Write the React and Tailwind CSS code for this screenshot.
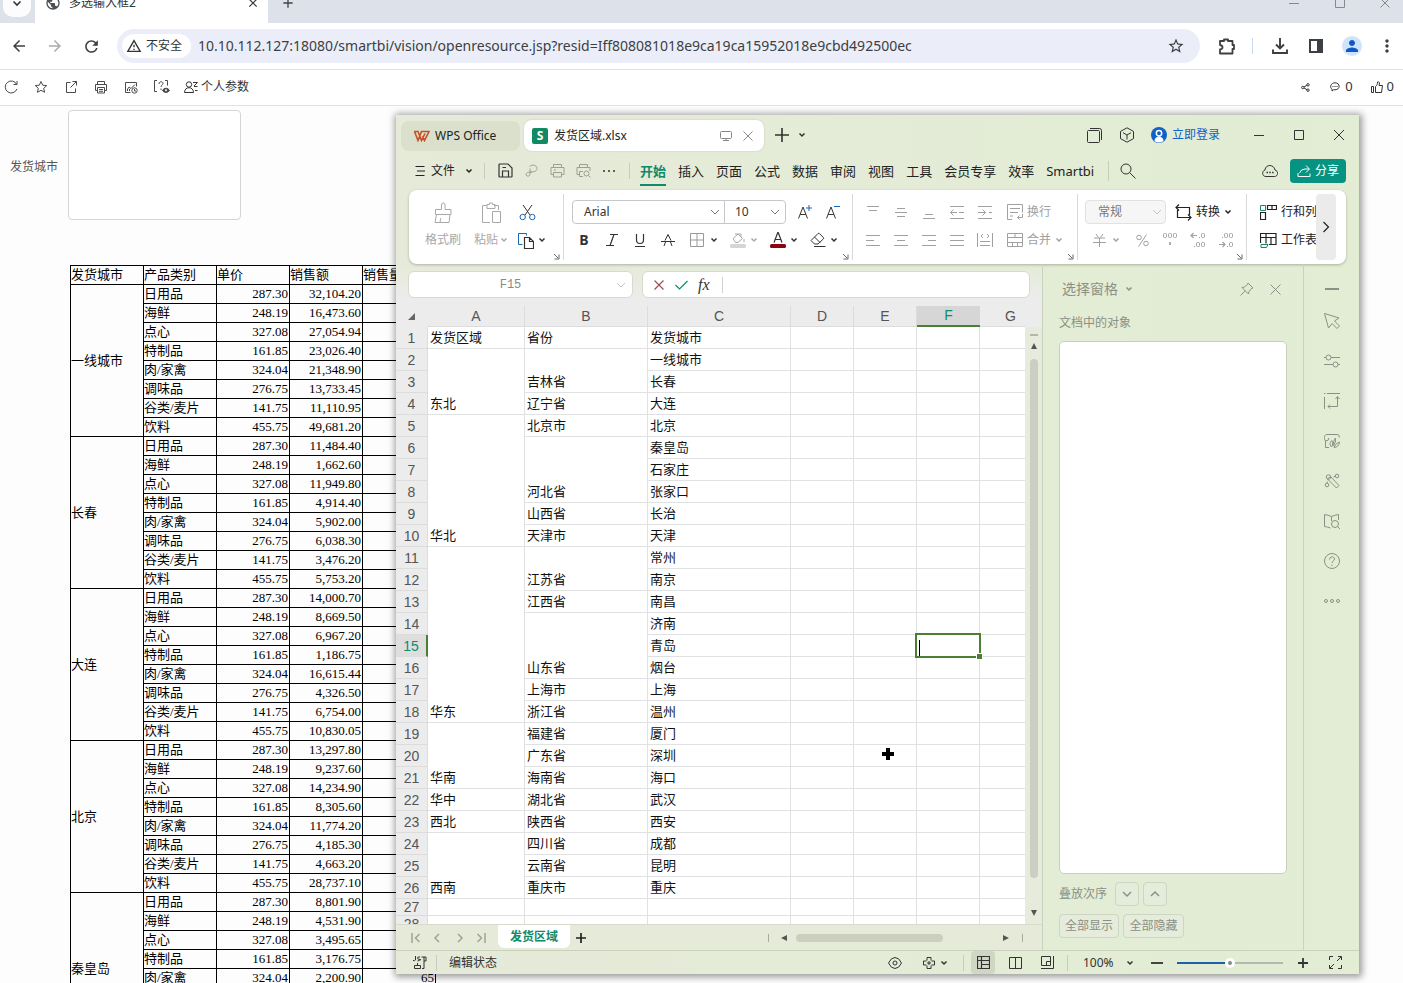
import React from "react";
import {
  MdArrowBack,
  MdArrowForward,
  MdRefresh,
  MdStarBorder,
  MdPerson,
  MdMoreVert,
  MdPublic,
  MdOutlineWarningAmber,
  MdAdd,
  MdClose,
} from "react-icons/md";

function Svg({ w = 16, h = w, className = "", children }) {
  return (
    <svg
      width={w}
      height={h}
      viewBox={`0 0 ${w} ${h}`}
      fill="none"
      stroke="currentColor"
      strokeWidth="1"
      className={`shrink-0 ${className}`}
      aria-hidden="true"
    >
      {children}
    </svg>
  );
}

function IconButton({ label, className = "", children }) {
  return (
    <button type="button" aria-label={label} className={`flex shrink-0 items-center justify-center ${className}`}>
      {children}
    </button>
  );
}

const Chevron = ({ className = "" }) => (
  <Svg w={8} className={className}>
    <path d="M1.500 2.500 4 5l2.500-2.500" strokeWidth="1.500" />
  </Svg>
);
const WideChevron = ({ className = "" }) => (
  <Svg w={10} className={className}>
    <path d="m1 3 4 4 4-4" />
  </Svg>
);

/* ---------- Browser ---------- */

function TabStrip() {
  return (
    <div className="flex h-[23px] shrink-0 items-end overflow-hidden bg-[#dde1e9]">
      <div className="flex h-10 w-full shrink-0 items-center">
        <IconButton label="搜索标签页" className="ml-[3px] h-7 w-7 rounded-[10px] bg-[#fcfcfe] text-[#333]">
          <Svg w={10}><path d="m1.500 3.500 3.500 3.500 3.500-3.500" strokeWidth="1.600" /></Svg>
        </IconButton>
        <div className="ml-1 flex h-10 w-[233px] items-center rounded-t-xl bg-white pl-[10px] pr-2">
          <MdPublic className="size-4 text-[#4d5156]" />
          <span className="ml-2 flex-1 text-xs leading-5 text-[#333]">多选输入框2</span>
          <IconButton label="关闭标签页" className="text-[#333]"><MdClose className="size-3.5" /></IconButton>
        </div>
        <IconButton label="新标签页" className="ml-3 text-[#444]"><MdAdd className="size-4" /></IconButton>
        <div className="ml-auto flex text-[#888]">
          <IconButton label="最小化" className="w-[46px]"><Svg w={10}><path d="M0 5.500h10" /></Svg></IconButton>
          <IconButton label="最大化" className="w-[46px]"><Svg w={10}><path d="M.5.5h9v9h-9z" /></Svg></IconButton>
          <IconButton label="关闭" className="w-[40px] pl-1"><Svg w={10}><path d="m.5.5 9 9m0-9-9 9" /></Svg></IconButton>
        </div>
      </div>
    </div>
  );
}

function AddressBar() {
  return (
    <div className="flex h-[46px] shrink-0 items-center bg-white pl-px text-[#3c3f43]">
      <IconButton label="后退" className="w-9"><MdArrowBack className="size-[18px]" /></IconButton>
      <IconButton label="前进" className="w-9 text-[#a9abae]"><MdArrowForward className="size-[18px]" /></IconButton>
      <IconButton label="重新加载" className="w-9"><MdRefresh className="size-[19px]" /></IconButton>
      <div className="ml-2 flex h-[34px] min-w-0 flex-1 items-center rounded-full bg-[#ebeef8] pl-[5px] pr-[15px]">
        <span className="flex h-6 w-[69px] shrink-0 items-center rounded-full bg-white pl-1 text-xs text-[#303236]">
          <MdOutlineWarningAmber className="mr-1 size-4" />
          不安全
        </span>
        <input
          aria-label="地址栏"
          readOnly
          value="10.10.112.127:18080/smartbi/vision/openresource.jsp?resid=Iff808081018e9ca19ca15952018e9cbd492500ec"
          className="ml-[7px] min-w-0 flex-1 bg-transparent text-sm text-[#3c4043] outline-none"
        />
        <IconButton label="收藏"><MdStarBorder className="size-[18px]" /></IconButton>
      </div>
      <IconButton label="扩展程序" className="ml-[9px] w-9">
        <Svg w={18}>
          <path d="M2 4h4V2.500h4V4h4.500v4H16v4h-1.500v4.500H2v-4q2.500-.5 2.500-2.300T2 8z" strokeWidth="1.800" strokeLinejoin="round" />
        </Svg>
      </IconButton>
      <span className="ml-[7px] mr-[9px] h-4 w-px bg-[#c9dced]" />
      <IconButton label="下载" className="w-9">
        <Svg w={18}>
          <path d="M9 1v10M5 7.500l4 4 4-4M2 12.500V16h14v-3.500" strokeWidth="1.900" />
        </Svg>
      </IconButton>
      <IconButton label="侧边栏" className="w-9">
        <Svg w={16}>
          <path d="M2 2h12v12H2z" strokeWidth="2" />
          <path d="M9 1.500h6v13H9z" fill="currentColor" stroke="none" />
        </Svg>
      </IconButton>
      <IconButton label="个人资料" className="w-9">
        <span className="flex size-5 items-center justify-center rounded-full bg-[#cfe4fb] text-[#1158c7]">
          <MdPerson className="size-[18px]" />
        </span>
      </IconButton>
      <IconButton label="更多" className="w-[33px]"><MdMoreVert className="size-5" /></IconButton>
    </div>
  );
}

function ReportToolbar() {
  return (
    <div className="flex h-[37px] shrink-0 items-center gap-4 border-y border-[#dfe1e5] bg-white pb-px pl-1 pr-[9px] text-[#4a4a4a]">
      <IconButton label="刷新"><Svg w={14}><path d="M12.700 4.500a6 6 0 1 0 .2 4.500M13 1v3.500H9.500" /></Svg></IconButton>
      <IconButton label="收藏报表"><Svg w={14}><path d="m7 1.500 1.700 3.700 4 .4-3 2.700.9 4L7 10.300l-3.600 2 .9-4-3-2.700 4-.4z" /></Svg></IconButton>
      <IconButton label="导出"><Svg w={14}><path d="M6.500 2.500h-4v10h9v-4M8.500 1.500h4v4M12.500 1.500l-6 6" /></Svg></IconButton>
      <IconButton label="打印"><Svg w={14}><path d="M3.500 4.500v-3h7v3M3.500 10.500h-2v-6h11v6h-2M3.500 7.500h7v5.500h-7zM5 9.500h4M5 11.300h4" /></Svg></IconButton>
      <IconButton label="定时图表"><Svg w={14}><path d="M6.500 12.500h-5v-10h11v4M3 10l2-3 2 1.500 4-4M3.500 11v-2M5.500 11V9" /><circle cx="10.500" cy="10.500" r="2.700" /><path d="M10.500 9v2H12" /></Svg></IconButton>
      <IconButton label="参数帮助">
        <Svg w={16} className="-mr-0.5"><path d="M3 1.500H.5v11H3M11 1.500h2.500v5M5 5c0-3 4-3 4-.5C9 6 7 6 7 8M7 9.500V11" /><path d="M8.500 11.500c1.500-3 5.500-3 7 0-1.500 2.500-5.500 2.500-7 0z" fill="currentColor" /><circle cx="12" cy="11.300" r="1" fill="white" stroke="none" /></Svg>
      </IconButton>
      <button type="button" className="flex items-center gap-[3px] text-xs text-[#333]">
        <Svg w={14}><circle cx="5" cy="4.500" r="2.700" /><path d="M.5 12.500C.5 9 3 7.700 5 7.700s4.500 1.300 4.500 4.800zM9 2.500h4.500M10 6.500h3.500M11 10.500h2.500M13.500 2.500 10 6" /></Svg>
        个人参数
      </button>
      <div className="ml-auto flex items-center text-[13px] text-[#333]">
        <IconButton label="分享"><Svg w={9}><circle cx="1.800" cy="4.500" r="1.200" /><circle cx="7" cy="1.800" r="1.200" /><circle cx="7" cy="7.200" r="1.200" /><path d="m3 4 3-1.700M3 5l3 1.700" /></Svg></IconButton>
        <button type="button" className="ml-5 flex items-center gap-[5px]">
          <Svg w={10}><path d="M5 .8c5.500 0 5.500 7 0 7H3.500L2 9V7.200C-.8 5 1 .8 5 .8z" /><path d="M2.500 4.500h1M4.500 4.500h1M6.500 4.500h1" /></Svg>
          0
        </button>
        <button type="button" className="ml-[18px] flex items-center gap-1">
          <Svg w={12}><path d="M.5 5.500h2v6h-2zM4.500 11.500v-6C6 4.500 6.500 3 6.500 1c1.500-.8 2.500.5 1.500 3.500h3.500l-1 7z" /></Svg>
          0
        </button>
      </div>
    </div>
  );
}

const CATEGORIES = [
  ["日用品", "287.30"],
  ["海鲜", "248.19"],
  ["点心", "327.08"],
  ["特制品", "161.85"],
  ["肉/家禽", "324.04"],
  ["调味品", "276.75"],
  ["谷类/麦片", "141.75"],
  ["饮料", "455.75"],
];

const SALES = [
  { city: "一线城市", amounts: ["32,104.20", "16,473.60", "27,054.94", "23,026.40", "21,348.90", "13,733.45", "11,110.95", "49,681.20"] },
  { city: "长春", amounts: ["11,484.40", "1,662.60", "11,949.80", "4,914.40", "5,902.00", "6,038.30", "3,476.20", "5,753.20"] },
  { city: "大连", amounts: ["14,000.70", "8,669.50", "6,967.20", "1,186.75", "16,615.44", "4,326.50", "6,754.00", "10,830.05"] },
  { city: "北京", amounts: ["13,297.80", "9,237.60", "14,234.90", "8,305.60", "11,774.20", "4,185.30", "4,663.20", "28,737.10"] },
  { city: "秦皇岛", amounts: ["8,801.90", "4,531.90", "3,495.65", "3,176.75", "2,200.90"], counts: { 4: "65" } },
];

function ReportTable() {
  const cell = "h-[19px] border border-black p-0 font-normal";
  return (
    <table className="ml-[70px] mt-[45px] w-[366px] table-fixed border-collapse text-left font-['Liberation_Serif','Noto_Sans_CJK_SC',serif] text-[13px] leading-[18px] text-black">
      <thead>
        <tr>
          {["发货城市", "产品类别", "单价", "销售额", "销售量"].map((h) => (
            <th key={h} className={cell}>{h}</th>
          ))}
        </tr>
      </thead>
      <tbody>
        {SALES.map(({ city, amounts, counts = {} }) =>
          CATEGORIES.map(([name, price], i) => (
            <tr key={city + name}>
              {i === 0 && <td rowSpan={8} className={cell}>{city}</td>}
              <td className={cell}>{name}</td>
              <td className={`${cell} pr-px text-right`}>{price}</td>
              <td className={`${cell} pr-px text-right`}>{amounts[i]}</td>
              <td className={`${cell} pr-px text-right`}>{counts[i]}</td>
            </tr>
          ))
        )}
      </tbody>
    </table>
  );
}

function Report() {
  return (
    <main className="min-h-0 flex-1 overflow-hidden pt-1">
      <div className="flex items-center pl-[10px]">
        <label htmlFor="city" className="mr-[10px] pt-1 text-xs text-[#555]">发货城市</label>
        <textarea id="city" className="h-[110px] w-[173px] resize-none rounded-sm border border-[#d4d4d8] bg-white outline-none" />
      </div>
      <ReportTable />
    </main>
  );
}

/* ---------- Spreadsheet window ---------- */

function TitleBar() {
  return (
    <div className="flex h-10 shrink-0 items-center pl-[5px] text-[#333]">
      <button type="button" className="mt-px flex h-[30px] w-[119px] items-center rounded-lg bg-[#dae0cb] pl-3 text-xs text-[#222]">
        <Svg w={17} h={12} className="mr-[5px]">
          <path d="M1 1.500h4l3.500 9 3.500-7M1.500 1.500l3.500 9 3.500-9h7.500l-4.500 9-2-4.500" stroke="#c5502a" strokeWidth="1.600" />
        </Svg>
        WPS Office
      </button>
      <div className="ml-1 mt-px flex h-[31px] w-[240px] items-center rounded-lg bg-white pl-2 pr-2.5 shadow-[0_0_2px_rgba(0,0,0,0.15)]">
        <span className="flex size-4 items-center justify-center rounded-xs bg-[#0f8a63] text-xs font-bold text-white">S</span>
        <span className="ml-1.5 flex-1 text-xs text-[#222]">发货区域.xlsx</span>
        <Svg w={12} className="mr-2.5 text-[#888]"><rect x=".5" y="1.500" width="11" height="7" rx="1" /><path d="M6 8.500v2M3 10.500h6" /></Svg>
        <IconButton label="关闭文档" className="text-[#888]"><Svg w={12}><path d="m1.500 1.500 9 9m0-9-9 9" /></Svg></IconButton>
      </div>
      <IconButton label="新建" className="ml-[11px]"><Svg w={14}><path d="M7 0v14M0 7h14" strokeWidth="1.600" /></Svg></IconButton>
      <IconButton label="标签列表" className="ml-[9px]"><Chevron /></IconButton>
      <div className="ml-auto flex items-center">
        <IconButton label="窗口" className="w-8"><Svg w={15}><rect x=".5" y="2.500" width="12" height="12" rx="1" /><path d="M3 .5h9.500q2 0 2 2V12" /></Svg></IconButton>
        <IconButton label="应用" className="w-8"><Svg w={16}><path d="m8 .8 6.500 3.600v7.200L8 15.200l-6.500-3.600V4.400zM4 5.700 8 8l4-2.300M8 8v4.500" /></Svg></IconButton>
        <button type="button" className="ml-2 mr-[19px] flex items-center gap-[5px] text-xs text-[#1160c8]">
          <Svg w={16}><circle cx="8" cy="8" r="8" fill="#1160c8" stroke="none" /><circle cx="8" cy="6.300" r="2.700" stroke="white" strokeWidth="1.500" /><path d="M3.500 14c0-6 9-6 9 0A8 8 0 0 1 3.500 14z" fill="white" stroke="none" /></Svg>
          立即登录
        </button>
        <IconButton label="最小化窗口" className="w-10"><Svg w={10}><path d="M0 5.500h10" /></Svg></IconButton>
        <IconButton label="最大化窗口" className="w-10"><Svg w={10}><path d="M.5.5h9v9h-9z" /></Svg></IconButton>
        <IconButton label="关闭窗口" className="w-10"><Svg w={10}><path d="m0 0 10 10m0-10L0 10" /></Svg></IconButton>
      </div>
    </div>
  );
}

const MENUS = ["插入", "页面", "公式", "数据", "审阅", "视图", "工具", "会员专享", "效率", "Smartbi"];

function MenuBar() {
  const tool = "h-6 w-[26px]";
  return (
    <div className="flex h-[31px] shrink-0 items-center pl-[19px] pr-[13px] text-[#333]">
      <button type="button" className="flex items-center text-xs text-[#222]">
        <Svg w={10} h={12} className="mr-1.5"><path d="M.5 1.500h9M2 6h8M.5 10.500h9" /></Svg>
        文件
        <Chevron className="ml-2.5" />
      </button>
      <span className="ml-[11px] h-4 w-px bg-[#c8ccbd]" />
      <div className="ml-[7px] flex">
        <IconButton label="保存" className={tool}><Svg w={15}><path d="M1 13.500V2q0-1 1-1h8l4 4v8.500q0 .5-.5.5h-12q-.5 0-.5-.5zM4.500 14V8h6v6M4.500 4.500H8" strokeWidth="1.200" /></Svg></IconButton>
        <IconButton label="输出为PDF" className={`${tool} text-[#9ba093]`}><Svg w={13}><path d="M4.500 2.500C7 0 12 1 12 4.500S7 8 5 8M5 4.500V10c0 3-4 2.500-4 .5S4 8 7 8" /></Svg></IconButton>
        <IconButton label="打印文档" className={`${tool} text-[#9ba093]`}><Svg w={15}><path d="M3.500 4.500v-3h8v3M3.500 11.500H1v-7h13v7h-2.500M3.500 9.500h8V14h-8zM4 7h2" /></Svg></IconButton>
        <IconButton label="打印预览" className={`${tool} text-[#9ba093]`}><Svg w={15}><path d="M3.500 4.500v-3h8v3M3.500 11.500H1v-7h13V8M3.500 13.500v-5H7M3.500 13.500H7" /><circle cx="10.500" cy="10.500" r="2.500" /><path d="m12.500 12.500 2 2" /></Svg></IconButton>
        <IconButton label="更多工具" className={tool}><Svg w={14} h={4}><path d="M1 2h2M6 2h2M11 2h2" strokeWidth="1.600" /></Svg></IconButton>
      </div>
      <span className="ml-[7px] h-4 w-px bg-[#c8ccbd]" />
      <nav className="ml-2.5 flex gap-3 text-[13px] text-[#222]">
        <button type="button" className="mt-[5px] border-b-2 border-[#0f8a6b] pb-[3px] font-bold leading-5 text-[#0f8a6b]">开始</button>
        {MENUS.map((m) => (
          <button type="button" key={m} className="leading-5">{m}</button>
        ))}
      </nav>
      <span className="ml-3.5 h-5 w-px bg-[#c8ccbd]" />
      <IconButton label="查找" className="ml-[11px]"><Svg w={16}><circle cx="6" cy="6" r="5" /><path d="m9.500 9.500 6 6" /></Svg></IconButton>
      <IconButton label="云文档" className="ml-auto mr-3"><Svg w={16} h={14}><path d="M4 12.500C-.5 12.500 0 6.500 3 6c.5-6 9-6 10 0 3.500.5 3.500 6.500-.5 6.500z" /><path d="M4.500 8.500H6M7.300 8.500h1.500M10.100 8.500h1.500" strokeWidth="1.400" /></Svg></IconButton>
      <button type="button" className="flex h-6 w-14 items-center justify-center gap-1 rounded bg-[#079381] text-xs text-white">
        <Svg w={14}><path d="M9 1.500 12.500 5 9 8.500M12 5H8Q4 5 2.500 9M1 9v3.500h12V9.500" /></Svg>
        分享
      </button>
    </div>
  );
}

const RibbonGroup = ({ className = "", corner = true, children }) => (
  <div className={`relative flex h-full shrink-0 pt-2 ${corner ? "border-r border-[#d9d9d9]" : ""} ${className}`}>
    {children}
    {corner && (
      <Svg w={7} className="absolute bottom-0 right-[3px] text-[#666]"><path d="m1 1 4 4M6 1.500V6H1.500" /></Svg>
    )}
  </div>
);

const HLines = ({ lines }) => (
  <Svg w={16}>
    <path d={lines} />
  </Svg>
);

const ALIGN_TOP = [
  ["顶端对齐", "M2 2.500h12M4 6.500h8"],
  ["垂直居中", "M4 4.500h8M2 8.500h12M4 12.500h8"],
  ["底端对齐", "M4 10.500h8M2 14.500h12"],
  ["减少缩进", "M1 2.500h14M10 8.500h5M1 14.500h14M8 8.500H1.500M4.500 5.500l-3 3 3 3"],
  ["增加缩进", "M1 2.500h14M12 8.500h3M1 14.500h14M1 8.500h7.500M5.500 5.500l3 3-3 3"],
];
const ALIGN_BOTTOM = [
  ["左对齐", "M1 3.500h14M1 8.500h8M1 13.500h14"],
  ["居中", "M1 3.500h14M4 8.500h8M1 13.500h14"],
  ["右对齐", "M1 3.500h14M7 8.500h8M1 13.500h14"],
  ["两端对齐", "M1 3.500h14M1 8.500h14M1 13.500h14"],
  ["分散对齐", "M.5 1v14M15.500 1v14M3 9.500h10M3 13.500h10M6 2 4 4l2 2M10 2l2 2-2 2"],
];

function Ribbon() {
  return (
    <div className="mx-[13px] mt-1 flex h-[74px] shrink-0 overflow-hidden rounded-lg bg-white py-1 text-xs text-[#333] shadow-[0_1px_3px_rgba(0,0,0,0.25)]">
      <RibbonGroup className="w-[155px] pl-4">
        <button type="button" className="flex h-[46px] w-9 flex-col items-center justify-between text-[#a8a8a8]">
          <Svg w={20} h={22}><path d="M2.500 12.500v-5h6V3q0-2 1.800-2T12 3v4.500h6v5zM3.500 12.500 2 20.500h14l1-8M7 20l1-4" /></Svg>
          格式刷
        </button>
        <button type="button" className="ml-3 flex h-[46px] w-9 flex-col items-center justify-between text-[#a8a8a8]">
          <Svg w={21} h={22}><path d="M6 3.500H1.500v17H9M13 3.500h4.500V8M6 6.500v-4h2.500V1h3v1.500H14v4zM11.500 9.500h8v11h-8z" /></Svg>
          <span className="flex items-center gap-0.5 whitespace-nowrap">粘贴<Chevron /></span>
        </button>
        <div className="-mt-[2px] ml-2 flex flex-col gap-1">
          <IconButton label="剪切" className="h-6 w-5"><Svg w={17}><path d="m4 1 7 10M13 1 6 11" stroke="#333" /><circle cx="3.700" cy="13" r="2.700" stroke="#1667b5" /><circle cx="13.300" cy="13" r="2.700" stroke="#1667b5" /></Svg></IconButton>
          <button type="button" aria-label="复制" className="flex h-6 items-center gap-1">
            <Svg w={17}><path d="M5.500 12.500h-4V1.500h8v2" stroke="#1667b5" /><path d="M7.500 5.500h5l4 4v7h-9zM12.500 5.500v4h4" stroke="#333" strokeWidth="1.200" /></Svg>
            <Chevron />
          </button>
        </div>
      </RibbonGroup>

      <RibbonGroup className="w-[289px] flex-col gap-1 pl-2">
        <div className="-mt-[2px] flex h-6 items-center">
          <button type="button" aria-label="字体" className="flex h-6 w-[153px] items-center justify-between rounded-l border border-[#c4c8cc] pl-[11px] pr-1">Arial<WideChevron className="text-[#777]" /></button>
          <button type="button" aria-label="字号" className="-ml-px flex h-6 w-[62px] items-center justify-between rounded-r border border-[#c4c8cc] pl-[10px] pr-[5px]">10<WideChevron className="text-[#777]" /></button>
          <IconButton label="增大字号" className="ml-2.5 w-[18px]"><Svg w={16}><path d="M1.500 14.500 6 3l4.500 11.500M3.200 10.500h5.600" /><path d="M12 1v6M9 4h6" stroke="#1667b5" /></Svg></IconButton>
          <IconButton label="减小字号" className="ml-2.5 w-[18px]"><Svg w={16}><path d="M1.500 14.500 6 3l4.500 11.500M3.200 10.500h5.600" /><path d="M9 2.500h6" stroke="#1667b5" /></Svg></IconButton>
        </div>
        <div className="flex h-6 items-center">
          <IconButton label="加粗" className="w-6"><span className="text-sm font-bold">B</span></IconButton>
          <IconButton label="倾斜" className="ml-1 w-6"><Svg w={12}><path d="M4 .5h8M0 11.500h8M8 .5 4 11.500" strokeWidth="1.200" /></Svg></IconButton>
          <IconButton label="下划线" className="ml-1 w-6"><Svg w={12} h={13}><path d="M2.500 0v6q0 3.500 3.500 3.500T9.500 6V0M1 12.500h10" strokeWidth="1.200" /></Svg></IconButton>
          <IconButton label="删除线" className="ml-1 w-6"><Svg w={14}><path d="M4 7.500 7 1.500 10 7.500M3 13l1.500-4M11 13 9.500 9M0 8.500h14" /></Svg></IconButton>
          <IconButton label="边框" className="ml-[10px] gap-1.5"><Svg w={14} className="text-[#999]"><path d="M.5.5h13v13H.5zM7 .5v13M.5 7h13" /></Svg><Chevron /></IconButton>
          <IconButton label="填充颜色" className="ml-3 gap-1 text-[#aaa]"><Svg w={16}><path d="M3 6.500 8 2l4.500 4.500L8 10.500H5.500zM5 2h6v3M14 7v3" /><rect y="12" width="16" height="4" rx="1.500" fill="#d5d5d5" stroke="none" /></Svg><Chevron /></IconButton>
          <IconButton label="字体颜色" className="ml-3 gap-1"><Svg w={16}><path d="M4 10.500 8 0l4 10.500M5.500 7.500h5" strokeWidth="1.200" /><rect y="12" width="16" height="4" rx="1.500" fill="#900010" stroke="none" /></Svg><Chevron /></IconButton>
          <IconButton label="清除" className="ml-3 gap-1"><Svg w={16}><path d="m1 8.500 7-7q.7-.5 1.400 0l4 4q.6.700 0 1.400L8 12H4.500zM4.500 5l5.500 5.500M4 14.500h11.500" /></Svg><Chevron /></IconButton>
        </div>
      </RibbonGroup>

      <RibbonGroup className="w-[225px] flex-col gap-1 pl-1.5 text-[#a0a0a0]">
        <div className="-mt-[2px] flex h-6 items-center">
          {ALIGN_TOP.map(([n, d]) => (
            <IconButton key={n} label={n} className="w-7"><HLines lines={d} /></IconButton>
          ))}
          <button type="button" className="ml-2 flex items-center gap-1">
            <Svg w={16}><path d="M5 15.500H.5V.5h15v8M3 4.500h10M3 8.500h8M3 12h3M15.500 10v3.500h-5M12.500 11.500l-2 2 2 2" /></Svg>换行
          </button>
        </div>
        <div className="flex h-6 items-center">
          {ALIGN_BOTTOM.map(([n, d]) => (
            <IconButton key={n} label={n} className="w-7"><HLines lines={d} /></IconButton>
          ))}
          <button type="button" className="ml-2 flex items-center gap-1">
            <Svg w={16}><path d="M.5 1.500h15v13H.5zM.5 5.500h15M.5 10.500h15M8 1.500v4M5.500 10.500v4M10.500 10.500v4" /></Svg>合并<Chevron />
          </button>
        </div>
      </RibbonGroup>

      <RibbonGroup className="w-[169px] flex-col gap-1 pl-[7px]">
        <div className="-mt-[2px] flex h-6 items-center">
          <button type="button" aria-label="数字格式" className="flex h-6 w-[81px] items-center justify-between rounded border border-[#e2e2e2] bg-[#f6f6f6] pl-3 pr-[3px] text-[#777]">常规<WideChevron className="text-[#c4c4c4]" /></button>
          <button type="button" className="ml-[9px] flex items-center gap-1 text-[#222]">
            <Svg w={17}><path d="M1 3.500h13.500v7.500M4 .5l-3 3 3 3M16 13.500H2.500V6M13 10.500l3 3-3 3" strokeWidth="1.200" /></Svg>转换<Chevron />
          </button>
        </div>
        <div className="flex h-6 items-center text-[#a0a0a0]">
          <IconButton label="货币" className="ml-2 gap-1.5"><Svg w={13}><path d="m3 0 2.500 3.500M10 0 7.500 3.500M1 4h11M0 8.500h13M6.500 4v9" /></Svg><Chevron /></IconButton>
          <IconButton label="百分比" className="ml-2.5 w-6"><Svg w={13}><circle cx="3" cy="3.500" r="2.300" /><circle cx="10" cy="9.500" r="2.300" /><path d="M10.500.5l-8 12" /></Svg></IconButton>
          <IconButton label="千位分隔" className="ml-1 w-6"><Svg w={16}><rect x="1.500" y="1.500" width="3" height="4" rx="1" /><rect x="6.500" y="1.500" width="3" height="4" rx="1" /><rect x="11.500" y="1.500" width="3" height="4" rx="1" /><path d="M8 10v3" strokeWidth="1.700" /></Svg></IconButton>
          <IconButton label="增加小数位" className="ml-1 w-6"><Svg w={16}><path d="M1 3.500h6M3.500 1 1 3.500 3.500 6M9 5.500h1M4 14.500h1" strokeWidth="1.200" /><rect x="11.500" y="1.500" width="3" height="4" rx="1" /><rect x="6.500" y="10.500" width="3" height="4" rx="1" /><rect x="11.500" y="10.500" width="3" height="4" rx="1" /></Svg></IconButton>
          <IconButton label="减少小数位" className="ml-1 w-6"><Svg w={16}><path d="M1 12.500h6M4.500 10 7 12.500 4.500 15M4 5.500h1M9 14.500h1" strokeWidth="1.200" /><rect x="6.500" y="1.500" width="3" height="4" rx="1" /><rect x="11.500" y="1.500" width="3" height="4" rx="1" /><rect x="11.500" y="10.500" width="3" height="4" rx="1" /></Svg></IconButton>
        </div>
      </RibbonGroup>

      <div className="flex min-w-0 flex-1 overflow-hidden text-[#222]">
        <div className="flex w-[69px] flex-col gap-1 overflow-hidden whitespace-nowrap pl-[13px] pt-1.5">
          <button type="button" className="flex h-6 items-center gap-1">
            <Svg w={17}><path d="M.5 1.500h5v5h-5z" stroke="#0f8a6b" /><path d="M7.500 1.500h9v4h-9zM12 1.500v4M.5 8.500h5v7h-5z" strokeWidth="1.200" /></Svg>行和列
          </button>
          <button type="button" className="flex h-6 items-center gap-1">
            <Svg w={17}><path d="M.5 11V1.500h15.500v11H9M.5 5.500H16M6 1.500v10M11 5.500v7" strokeWidth="1.200" /><path d="M1 12.500h7l-1.500 3H1z" stroke="#0f8a6b" /></Svg>工作表
          </button>
        </div>
        <IconButton label="向右滚动" className="h-full w-5 rounded bg-[#ebebeb]"><Svg w={8} h={12}><path d="m1.500 1 5 5-5 5" strokeWidth="1.200" /></Svg></IconButton>
      </div>
    </div>
  );
}

function FormulaBar() {
  const box = "flex h-[27px] items-center rounded-md border border-[#d8dacd] bg-white";
  return (
    <div className="flex shrink-0 gap-[9px] px-3 pt-[7px]">
      <div className={`${box} w-[225px] pr-[6px]`}>
        <input aria-label="名称框" readOnly value="F15" className="min-w-0 flex-1 bg-transparent pr-1 text-center font-['Liberation_Mono',monospace] text-xs text-[#888] outline-none" />
        <WideChevron className="text-[#c4c4c4]" />
      </div>
      <div className={`${box} min-w-0 flex-1 pl-[11px]`}>
        <IconButton label="取消"><Svg w={10}><path d="m.5.5 9 9m0-9-9 9" stroke="#a0504c" strokeWidth="1.200" /></Svg></IconButton>
        <IconButton label="确认" className="ml-[11px]"><Svg w={13} h={10}><path d="m.5 5 4 4 8-8" stroke="#0f8a6b" strokeWidth="1.200" /></Svg></IconButton>
        <span className="ml-2.5 font-['Liberation_Serif',serif] text-base italic text-[#333]">fx</span>
        <span className="ml-3 h-4 w-px bg-[#d0d0d0]" />
        <input aria-label="编辑栏" className="min-w-0 flex-1 bg-transparent px-2 outline-none" />
      </div>
    </div>
  );
}

/* Each merged block is keyed by its first row: [row span, text]. */
const REGIONS = { 1: [1, "发货区域"], 2: [3, "东北"], 5: [6, "华北"], 11: [8, "华东"], 19: [3, "华南"], 22: [1, "华中"], 23: [1, "西北"], 24: [3, "西南"], 27: [1, ""], 28: [1, ""] };
const PROVINCES = { 1: [1, "省份"], 2: [2, "吉林省"], 4: [1, "辽宁省"], 5: [1, "北京市"], 6: [3, "河北省"], 9: [1, "山西省"], 10: [1, "天津市"], 11: [2, "江苏省"], 13: [1, "江西省"], 14: [3, "山东省"], 17: [1, "上海市"], 18: [1, "浙江省"], 19: [1, "福建省"], 20: [1, "广东省"], 21: [1, "海南省"], 22: [1, "湖北省"], 23: [1, "陕西省"], 24: [1, "四川省"], 25: [1, "云南省"], 26: [1, "重庆市"], 27: [1, ""], 28: [1, ""] };
const CITIES = ["发货城市", "一线城市", "长春", "大连", "北京", "秦皇岛", "石家庄", "张家口", "长治", "天津", "常州", "南京", "南昌", "济南", "青岛", "烟台", "上海", "温州", "厦门", "深圳", "海口", "武汉", "西安", "成都", "昆明", "重庆", "", ""];
const COLUMNS = ["A", "B", "C", "D", "E", "F", "G"];

function Grid() {
  const cell = "border-b border-r border-[#dfe1e3] bg-white p-0 pb-px pl-0.5 align-bottom";
  return (
    <table className="w-full table-fixed border-separate border-spacing-0 text-left text-[13px] leading-5 text-[#111]">
      <colgroup>
        <col className="w-8" />
        <col className="w-[97px]" />
        <col className="w-[123px]" />
        <col className="w-[143px]" />
        <col className="w-[63px]" />
        <col className="w-[63px]" />
        <col className="w-[63px]" />
        <col />
      </colgroup>
      <thead className="font-['Liberation_Sans',sans-serif] text-sm leading-[19px] text-[#555]">
        <tr className="h-[21px]">
          <th className="border-r border-[#ececec] p-0">
            <Svg w={7} className="mx-auto"><path d="M7 0v7H0z" fill="#666" stroke="none" /></Svg>
          </th>
          {COLUMNS.map((c) => (
            <th
              key={c}
              scope="col"
              className={`p-0 text-center font-normal ${c === "F" ? "border-b-2 border-[#4b8034] bg-[#d6d6d6] text-[#0f8a6b]" : c === "G" ? "border-b border-[#dcdcdc] pl-4" : "border-b border-r border-[#dcdcdc]"}`}
            >
              {c}
            </th>
          ))}
        </tr>
      </thead>
      <tbody>
        {CITIES.map((city, i) => {
          const n = i + 1;
          const active = n === 15;
          return (
            <tr key={n} className={n >= 27 ? "h-[17px] leading-[15px]" : "h-[22px]"}>
              <th
                scope="row"
                className={`p-0 text-center font-['Liberation_Sans',sans-serif] text-sm font-normal ${n >= 27 ? "leading-4" : "leading-5"} border-b border-b-[#dcdcdc] ${active ? "border-r-2 border-r-[#4b8034] bg-[#dedede] text-[#0f8a6b]" : "border-r border-r-[#dcdcdc] text-[#555]"}`}
              >
                {n}
              </th>
              {REGIONS[n] && <td rowSpan={REGIONS[n][0]} className={cell}>{REGIONS[n][1]}</td>}
              {PROVINCES[n] && <td rowSpan={PROVINCES[n][0]} className={cell}>{PROVINCES[n][1]}</td>}
              <td className={cell}>{city}</td>
              <td className={cell} />
              <td className={`${cell} relative`}>
                {n === 20 && (
                  <Svg w={12} className="absolute left-7 top-[3px]"><path d="M6 0v12M0 6h12" stroke="black" strokeWidth="4" /></Svg>
                )}
              </td>
              <td className={`${cell} relative`}>
                {active && (
                  <span className="absolute -bottom-0.5 -left-0.5 -right-0.5 -top-0.5 z-10 border-2 border-[#4b8034] bg-white">
                    <span className="absolute bottom-0 left-0.5 h-4 w-px bg-black" />
                    <span className="absolute -bottom-[3px] -right-[3px] size-[5px] bg-[#4b8034] outline outline-white" />
                  </span>
                )}
              </td>
              <td className="border-b border-[#dfe1e3] bg-white p-0" />
            </tr>
          );
        })}
      </tbody>
    </table>
  );
}

const Triangle = ({ d }) => (
  <Svg w={6}><path d={d} fill="#555" stroke="none" /></Svg>
);

function Sheet() {
  return (
    <section className="flex min-w-0 flex-1 flex-col bg-linear-to-b from-transparent to-[#ececec] to-[36px]">
      <FormulaBar />
      <div className="mt-2 flex min-h-0 flex-1 overflow-hidden">
        <div className="min-w-0 flex-1 overflow-hidden">
          <Grid />
        </div>
        <div className="mt-[21px] flex w-[17px] flex-col items-center bg-[#e7ebdb] pb-2 pt-[7px]">
          <span className="h-0.5 w-2 bg-[#b4b8aa]" />
          <IconButton label="向上滚动" className="mt-[7px]"><Triangle d="M3 0 6 6H0z" /></IconButton>
          <span className="mb-8 mt-2.5 w-2 flex-1 rounded-full bg-[#cbcfc3]" />
          <IconButton label="向下滚动"><Triangle d="M3 6 6 0H0z" /></IconButton>
        </div>
      </div>
      <div className="flex h-[26px] shrink-0 items-center border-t border-[#d8dbcc] bg-[#e6ead9] pl-[15px] text-[#a0a498]">
        <IconButton label="第一张"><Svg w={10}><path d="M1 0v10M8.500 1 4.500 5l4 4" strokeWidth="1.500" /></Svg></IconButton>
        <IconButton label="上一张" className="ml-3"><Svg w={8} h={10}><path d="M6 1 2 5l4 4" strokeWidth="1.500" /></Svg></IconButton>
        <IconButton label="下一张" className="ml-[15px]"><Svg w={8} h={10}><path d="m2 1 4 4-4 4" strokeWidth="1.500" /></Svg></IconButton>
        <IconButton label="最后一张" className="ml-3"><Svg w={10}><path d="M9 0v10M1.500 1l4 4-4 4" strokeWidth="1.500" /></Svg></IconButton>
        <button type="button" className="mb-[3px] ml-3 h-[23px] w-[72px] rounded-b-md bg-white pt-0.5 text-xs font-bold text-[#0f8a6b]">发货区域</button>
        <IconButton label="新建工作表" className="ml-1.5 text-[#222]"><Svg w={10}><path d="M5 0v10M0 5h10" strokeWidth="1.700" /></Svg></IconButton>
        <div className="ml-auto flex items-center">
          <span className="h-2 w-px bg-[#a8ac9e]" />
          <IconButton label="向左滚动" className="ml-3"><Triangle d="M0 3 6 0v6z" /></IconButton>
          <span className="ml-[9px] mr-[60px] h-2 w-[147px] rounded-full bg-[#cbcfc0]" />
          <IconButton label="向右滚动表格" className="mr-[13px]"><Triangle d="M6 3 0 0v6z" /></IconButton>
          <span className="mr-[19px] h-2 w-px bg-[#a8ac9e]" />
        </div>
      </div>
    </section>
  );
}

function SelectionPane() {
  const btn = "flex h-6 items-center justify-center rounded border border-[#cdd6c2] bg-[#e6ecdb]";
  return (
    <aside className="flex w-[261px] shrink-0 flex-col border-l border-[#c9d1bf] px-4 text-xs text-[#8b9085]">
      <div className="mt-[15px] flex h-5 items-center">
        <h2 className="ml-[3px] text-sm">选择窗格</h2>
        <Chevron className="ml-[7px]" />
        <IconButton label="固定" className="ml-auto"><Svg w={14}><path d="m8 1 5 5-1.500.5L9 9.500 8.500 12 2 5.500l2.500-.5L7.500 2.500zM5 9l-4.500 4.500" /></Svg></IconButton>
        <IconButton label="关闭窗格" className="ml-4 mr-1.5"><Svg w={11}><path d="m.5.5 10 10m0-10-10 10" /></Svg></IconButton>
      </div>
      <p className="mt-3.5 leading-5">文档中的对象</p>
      <div className="mt-2 min-h-0 flex-1 rounded-[5px] border border-[#c8d0bd] bg-white" />
      <div className="mt-2 flex items-center gap-1">
        <span className="mr-1">叠放次序</span>
        <button type="button" aria-label="下移一层" className={`${btn} w-6`}><Svg w={10}><path d="m1 3 4 4 4-4" strokeWidth="1.500" /></Svg></button>
        <button type="button" aria-label="上移一层" className={`${btn} w-6`}><Svg w={10}><path d="m1 7 4-4 4 4" strokeWidth="1.500" /></Svg></button>
      </div>
      <div className="mb-3 mt-2 flex gap-1">
        <button type="button" className={`${btn} w-[60px]`}>全部显示</button>
        <button type="button" className={`${btn} w-[61px]`}>全部隐藏</button>
      </div>
    </aside>
  );
}

const SIDE_TOOLS = [
  ["选择", <path key="p" d="m.5.5 4 14.500 3.500-4.500 5 5 2.500-2.500-5-5 4.500-3z" />],
  ["属性", <g key="g"><circle cx="4.500" cy="4.500" r="2.500" /><circle cx="11.500" cy="11.500" r="2.500" /><path d="M0 4.500h2M7 4.500h9M0 11.500h9M14 11.500h2" /></g>],
  ["对齐", <path key="p" d="M3 .5h13M.5 4v12M0 .5h1.500M13.500 4v9.500H4M11.500 6l2-2.500 2 2.500M6 11.500l-2 2 2 2" />],
  ["图库", <path key="p" d="M1.500 14.500V8C-.5 5 .5 1.500 3 1.500h10q2.500 0 2.500 3M1.500 14.500H5M1.500 8Q5 8 5 5M7.500 14C5 11 6 9 8 7.500c1 2.500 1 4.500-.5 6.500zM9 13q0-5 2.500-8 1 4-2.500 8zM10 14.500q1-4 5.500-5.500-.5 5-5.500 5.500z" />],
  ["美化", <g key="g"><path d="m6.500 3.500 8.500 9-2.500 2.500-9-9z" /><circle cx="4.500" cy="4" r="2.200" /><circle cx="13" cy="3" r="1.800" /><circle cx="3" cy="12" r="1.800" /><path d="m9.500 4 2-1M3.500 8.500 3 10" /></g>],
  ["查阅", <g key="g"><path d="M7.500 3.500Q4 2 .5 1.500v12q3 .5 6 1.500M7.500 3.500Q11 2 14.500 1.500V7M7.500 3.500V8" /><circle cx="11" cy="11" r="3.500" /><path d="m13.500 13.500 2.500 2.500" /></g>],
  ["帮助", <g key="g"><circle cx="8" cy="8" r="7.500" /><path d="M5.500 6.500c0-3.500 5-3.500 5-.5C10.500 8 8 8 8 10M8 11.500V13" /></g>],
  ["更多面板", <g key="g"><circle cx="2" cy="8" r="1.500" /><circle cx="8" cy="8" r="1.500" /><circle cx="14" cy="8" r="1.500" /></g>],
];

function SideStrip() {
  return (
    <div className="flex w-14 shrink-0 flex-col items-center border-l border-[#c9d1bf] text-[#8b9085]">
      <IconButton label="收起" className="mb-1 mt-[17px] h-4"><Svg w={14} h={2}><path d="M0 1h14" strokeWidth="2" /></Svg></IconButton>
      {SIDE_TOOLS.map(([name, shape]) => (
        <IconButton key={name} label={name} className="h-10 w-10"><Svg w={16}>{shape}</Svg></IconButton>
      ))}
    </div>
  );
}

function StatusBar() {
  return (
    <footer className="flex h-6 shrink-0 items-center border-t border-[#c9d0bb] px-[17px] text-xs text-[#333]">
      <Svg w={14}><path d="M2.500 0v4Q2 5 0 4.500M7 1Q4.500.5 4.500 2T7 3.500 4.500 5M8.500 1H13v4h-2v-4M11 5v7.500H9M1.500 12.500v-3h6v3zM4.500 9.500V7" /></Svg>
      <span className="ml-[9px] h-4 w-px bg-[#c8ccbd]" />
      <span className="ml-3">编辑状态</span>
      <div className="ml-auto flex items-center">
        <IconButton label="护眼模式"><Svg w={14}><path d="M.5 7Q3 1.500 7 1.500T13.500 7Q11 12.500 7 12.500T.5 7z" /><circle cx="7" cy="7" r="2" /></Svg></IconButton>
        <button type="button" aria-label="阅读模式" className="ml-5 flex items-center gap-1">
          <Svg w={14}><path d="M5 4.500V1.500h4v3M5 9.500v3h4v-3M4.500 5H1.500v4h3M9.500 5h3v4h-3M7 5v4M5 7h4" /></Svg>
          <Chevron />
        </button>
        <span className="ml-[15px] h-4 w-px bg-[#c8ccbd]" />
        <IconButton label="普通视图" className="ml-[7px] h-[23px] w-6 rounded-sm bg-[#cfd6c3]"><Svg w={13}><path d="M.5.5h12v12H.5zM.5 4.500h12M4.500.5v12M4.500 8.500h8" strokeWidth="1.200" /></Svg></IconButton>
        <IconButton label="页面布局" className="ml-2 h-[23px] w-6"><Svg w={13}><path d="M.5 1.500h12v11H.5zM6.500 1.500v11" /></Svg></IconButton>
        <IconButton label="分页预览" className="ml-2 h-[23px] w-6"><Svg w={13}><path d="M.5.5h9v9h-9zM12.500 0v12.500H0M5.500 9.500v-4h4" /></Svg></IconButton>
        <span className="ml-2 h-4 w-px bg-[#c8ccbd]" />
        <button type="button" className="ml-[15px] flex items-center"><span className="w-[43px] text-left">100%</span><Chevron /></button>
        <IconButton label="缩小" className="ml-[17px]"><Svg w={12} h={2}><path d="M0 1h12" strokeWidth="1.800" /></Svg></IconButton>
        <input
          type="range"
          aria-label="缩放比例"
          defaultValue="50"
          className="ml-3.5 h-3 w-[106px] appearance-none bg-linear-to-r from-[#1d5fa8] from-50% to-[#b4baab] to-50% bg-[length:100%_2px] bg-center bg-no-repeat [&::-webkit-slider-thumb]:size-2.5 [&::-webkit-slider-thumb]:appearance-none [&::-webkit-slider-thumb]:rounded-full [&::-webkit-slider-thumb]:border-[3px] [&::-webkit-slider-thumb]:border-white [&::-webkit-slider-thumb]:bg-[#888]"
        />
        <IconButton label="放大" className="ml-[15px]"><Svg w={10}><path d="M5 0v10M0 5h10" strokeWidth="1.800" /></Svg></IconButton>
        <IconButton label="全屏" className="ml-[21px]"><Svg w={13}><path d="M.5 4V.5H4M9 .5h3.500V4M.5 9v3.500H4M9 12.500h3.500V9M12 1 8 5M1 12l4-4" /></Svg></IconButton>
      </div>
    </footer>
  );
}

function SpreadsheetWindow() {
  return (
    <div className="absolute bottom-[9px] left-[396px] right-11 top-[115px] flex flex-col overflow-hidden bg-linear-to-r from-[#e6ead9] to-[#e2edd4] shadow-[1px_1px_7px_2px_rgba(0,0,0,0.4)]">
      <TitleBar />
      <MenuBar />
      <Ribbon />
      <div className="flex min-h-0 flex-1">
        <Sheet />
        <SelectionPane />
        <SideStrip />
      </div>
      <StatusBar />
    </div>
  );
}

export default function App() {
  return (
    <div className="relative flex h-screen flex-col overflow-hidden bg-[#fdfdfd] font-['Noto_Sans','Noto_Sans_CJK_SC',sans-serif]">
      <TabStrip />
      <AddressBar />
      <ReportToolbar />
      <Report />
      <SpreadsheetWindow />
    </div>
  );
}
